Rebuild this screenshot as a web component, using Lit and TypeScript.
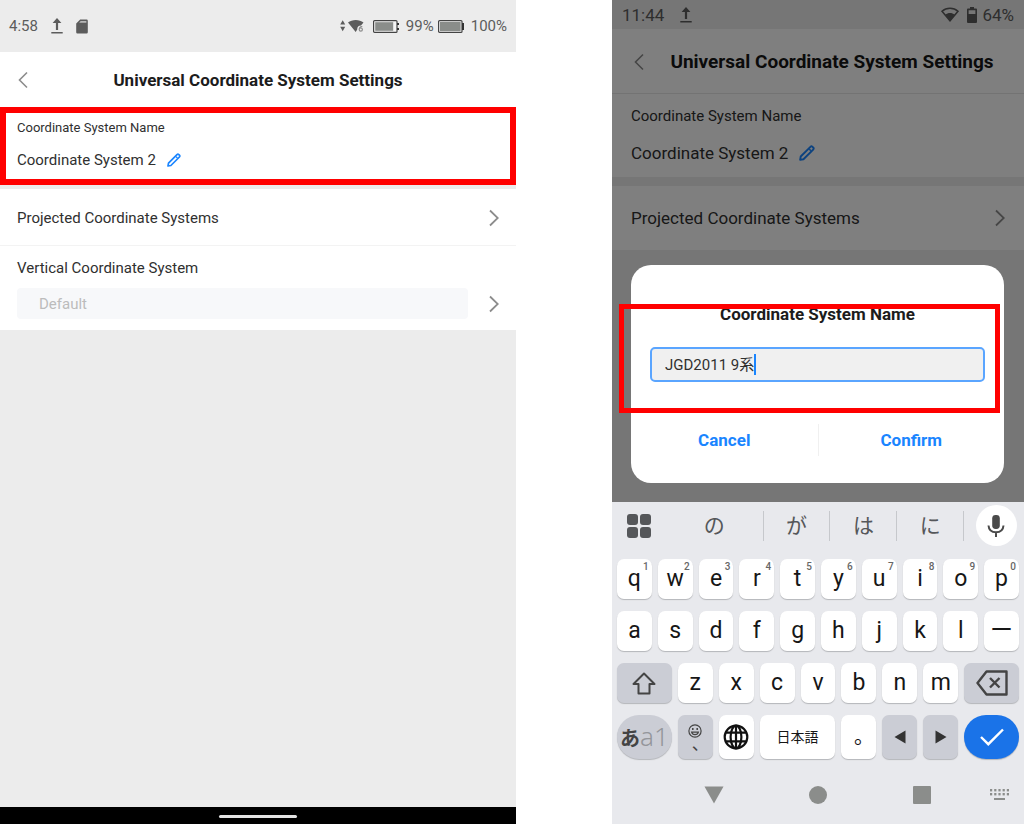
import { LitElement, html, css, svg, nothing } from "lit";
import { customElement } from "lit/decorators.js";

const chevronLeft = html`<svg class="chev" width="10" height="18" viewBox="0 0 10 18" fill="none" stroke="currentColor" stroke-width="1.6"><path d="M9 1.5 1.5 9 9 16.5" /></svg>`;
const chevronRight = html`<svg class="chev" width="10" height="18" viewBox="0 0 10 18" fill="none" stroke="currentColor" stroke-width="1.8"><path d="M1 1.5 8.8 9 1 16.5" /></svg>`;
const upload = html`<svg width="12" height="16" viewBox="0 0 12 16" fill="currentColor"><path d="M6 0 10.4 5H7.1V12H4.9V5H1.6ZM0.3 14H11.7V15.6H0.3Z" /></svg>`;
const sdCard = html`<svg width="12" height="15" viewBox="0 0 12 15"><path fill="currentColor" d="M4.2.5H10.6A1.2 1.2 0 0 1 11.8 1.7V13.2A1.2 1.2 0 0 1 10.6 14.4H1.4A1.2 1.2 0 0 1 .2 13.2V4.5Z" /><path fill="#b8b8b8" d="M4.6 2H10.4V3.8H3.2Z" /></svg>`;
const pencil = (size: number) => html`<svg width=${size} height=${size} viewBox="0 0 14 14" fill="none" stroke="#1a85ff" stroke-width="1.7" stroke-linejoin="round"><path d="M1 13 1.5 10.1 10 1.6A1.3 1.3 0 0 1 11.8 1.6L12.4 2.2A1.3 1.3 0 0 1 12.4 4L3.9 12.5Z" /><path d="M9 3.6 10.4 5" stroke-width="1.3" /></svg>`;

const shared = css`
  * {
    box-sizing: border-box;
  }
  button,
  input {
    font: inherit;
    color: inherit;
    margin: 0;
    padding: 0;
    border: 0;
    background: none;
  }
  svg {
    display: block;
    flex: none;
  }
  h1,
  h2,
  p {
    margin: 0;
  }
  .row {
    display: flex;
    align-items: center;
  }
  .grow {
    flex: 1;
    min-width: 0;
  }
`;

@customElement("settings-page")
export class SettingsPage extends LitElement {
  static styles = [
    shared,
    css`
      :host {
        display: flex;
        flex-direction: column;
        background: #ececec;
        color: #303030;
        font-size: 15px;
        line-height: 20px;
      }
      .status {
        height: 52px;
        padding: 0 9px;
        color: #5c5c5c;
      }
      .status svg {
        margin-left: 13px;
      }
      .status .net {
        margin: 0 9px 0 0;
      }
      .status .cell {
        margin: 0 7px 0 0;
      }
      .status .full {
        margin: 0 7px 0 4px;
      }
      header {
        display: grid;
        grid-template-columns: 20px 1fr 20px;
        align-items: center;
        height: 55px;
        padding: 0 18px;
        background: #fff;
      }
      .chev {
        color: #8c8c8c;
      }
      h1 {
        font-size: 17px;
        font-weight: 700;
        color: #1c1c1c;
        text-align: center;
      }
      .name {
        border: 6px solid #f00;
        background: #fff;
        padding: 5px 11px 9px;
      }
      .name label {
        display: block;
        font-size: 13px;
        margin-bottom: 12px;
      }
      .name .row {
        gap: 11px;
      }
      .item {
        width: 100%;
        height: 57px;
        margin-top: 4px;
        padding: 1px 17px 0;
        background: #fff;
        border-bottom: 1px solid #f3f3f3;
        text-align: left;
      }
      .vertical {
        background: #fff;
        padding: 12px 17px 11px;
      }
      .vertical label {
        display: block;
        margin-bottom: 10px;
      }
      .vertical .row {
        gap: 21px;
      }
      .vertical input {
        height: 31px;
        padding: 0 22px;
        border-radius: 4px;
        background: #f7f8fa;
        color: #bcbcbc;
      }
      .gesture {
        margin-top: auto;
        height: 17px;
        background: #000;
        display: flex;
        justify-content: center;
        align-items: center;
      }
      .gesture span {
        width: 78px;
        height: 3px;
        margin-top: 2px;
        border-radius: 2px;
        background: #e4e4e4;
      }
    `,
  ];

  render() {
    return html`
      <div class="status row">
        <span>4:58</span>${upload}${sdCard}<span class="grow"></span>
        <svg class="net" width="24" height="14" viewBox="0 0 24 14">
          <path fill="currentColor" d="M0.2 5.6 2.7 1.2 5.2 5.6ZM0.2 7.8 2.7 12.2 5.2 7.8Z" />
          <path fill="currentColor" d="M8 3.6C12 .2 19.5 .2 23.5 3.6L21 6.6C18.5 6.6 17.2 8 17.2 10.6L15.7 13Z" />
          <path fill="none" stroke="#8c8c8c" stroke-width="1.2" d="M22.3 7.6C20 7.3 19.2 9 19.2 10.6M19.2 10.6A1.6 1.6 0 1 0 22.4 10.6A1.6 1.6 0 1 0 19.2 10.6" />
        </svg>
        <svg class="cell" width="26" height="13" viewBox="0 0 26 13">
          <rect x=".6" y=".6" width="23.4" height="11.8" rx="1" fill="#f5f5f5" stroke="#444" stroke-width="1.2" />
          <rect x="2.2" y="2.2" width="18" height="8.6" fill="#8a8d8a" />
          <path d="M24 3H26V5H24ZM24 8H26V10H24Z" fill="#333" />
        </svg>
        <span>99%</span>
        <svg class="full" width="26" height="13" viewBox="0 0 26 13">
          <rect x=".6" y=".6" width="23.4" height="11.8" rx="1" fill="#f5f5f5" stroke="#444" stroke-width="1.2" />
          <rect x="2" y="2" width="20.6" height="9" fill="#8a8d8a" />
          <path d="M24 3H26.4V10H24Z" fill="#333" />
        </svg>
        <span>100%</span>
      </div>
      <header>
        <button aria-label="Back">${chevronLeft}</button>
        <h1>Universal Coordinate System Settings</h1>
      </header>
      <section class="name">
        <label for="edit">Coordinate System Name</label>
        <div class="row">
          <span>Coordinate System 2</span>
          <button id="edit">${pencil(14)}</button>
        </div>
      </section>
      <button class="item row"><span class="grow">Projected Coordinate Systems</span>${chevronRight}</button>
      <section class="vertical">
        <label for="vertical">Vertical Coordinate System</label>
        <div class="row">
          <input id="vertical" class="grow" value="Default" disabled />
          <button aria-label="Select vertical system">${chevronRight}</button>
        </div>
      </section>
      <div class="gesture"><span></span></div>
    `;
  }
}

@customElement("rename-page")
export class RenamePage extends LitElement {
  static styles = [
    shared,
    css`
      :host {
        display: block;
        position: relative;
        background: #ececec;
        color: #303030;
        font-size: 17px;
        line-height: 20px;
      }
      .status {
        height: 29px;
        padding: 0 10px;
        color: #5c5c5c;
      }
      .status .up {
        margin-left: 16px;
      }
      .wifi {
        margin-right: 8px;
      }
      .battery {
        margin-right: 5px;
      }
      header {
        display: grid;
        grid-template-columns: 12px 1fr;
        gap: 12px;
        align-items: center;
        height: 65px;
        padding: 1px 18px 0 22px;
        background: #fff;
        border-bottom: 1px solid #e6e6e6;
      }
      .chev {
        color: #8c8c8c;
      }
      h1 {
        font-size: 19px;
        font-weight: 700;
        color: #161616;
        text-align: center;
        white-space: nowrap;
      }
      .name {
        background: #fff;
        padding: 12px 19px 14px;
      }
      .name p {
        font-size: 15px;
        margin-bottom: 17px;
      }
      .name .row {
        gap: 11px;
      }
      .item {
        width: 100%;
        height: 64px;
        margin-top: 9px;
        padding: 0 19px;
        background: #fff;
        text-align: left;
      }
      .shade {
        position: absolute;
        inset: 0;
        display: flex;
        align-items: flex-end;
        padding: 0 20px 19px 19px;
        background: rgba(0, 0, 0, 0.5);
      }
      .modal {
        position: relative;
        flex: 1;
        padding: 39px 19px 27px;
        border-radius: 20px;
        background: #fff;
      }
      h2 {
        font-size: 17px;
        font-weight: 700;
        color: #1c1c1c;
        text-align: center;
      }
      .field {
        position: relative;
        margin: 23px 0 42px;
        font-size: 15px;
      }
      .field input {
        display: block;
        width: 100%;
        height: 35px;
        padding: 0 13px 2px;
        border: 2px solid #5aa5ff;
        border-radius: 5px;
        background: #f0f0f0;
        outline: none;
      }
      .caret {
        position: absolute;
        left: 104px;
        top: 7px;
        width: 2px;
        height: 21px;
        background: #1a85ff;
      }
      .actions {
        display: grid;
        grid-template-columns: 1fr 1fr;
        margin: 0 -19px;
        color: #1a85ff;
        font-weight: 700;
      }
      .actions button {
        height: 32px;
      }
      .actions button + button {
        border-left: 1px solid #f0f0f0;
      }
      .mark {
        position: absolute;
        left: -12px;
        right: 4px;
        top: 39px;
        height: 109px;
        border: 5px solid #f00;
        pointer-events: none;
      }
    `,
  ];

  render() {
    return html`
      <div class="status row">
        <span>11:44</span><span class="up">${upload}</span><span class="grow"></span>
        <svg class="wifi" width="18" height="15" viewBox="0 0 18 15">
          <path fill="none" stroke="currentColor" stroke-width="1.5" d="M1 4.2C5.5 .1 12.5 .1 17 4.2L9 13.8Z" />
          <path fill="currentColor" d="M4.3 7.6C7 5.5 11 5.5 13.7 7.6L9 14Z" />
        </svg>
        <svg class="battery" width="10" height="16" viewBox="0 0 10 16">
          <path fill="currentColor" fill-rule="evenodd" d="M3 0H7V1.6H9A1 1 0 0 1 10 2.6V15A1 1 0 0 1 9 16H1A1 1 0 0 1 0 15V2.6A1 1 0 0 1 1 1.6H3ZM1.6 3.2V7H8.4V3.2Z" />
        </svg>
        <span>64%</span>
      </div>
      <header>
        <button aria-label="Back">${chevronLeft}</button>
        <h1>Universal Coordinate System Settings</h1>
      </header>
      <section class="name">
        <p>Coordinate System Name</p>
        <div class="row">
          <span>Coordinate System 2</span>
          <button aria-label="Edit name">${pencil(16)}</button>
        </div>
      </section>
      <button class="item row"><span class="grow">Projected Coordinate Systems</span>${chevronRight}</button>
      <div class="shade">
        <div class="modal" role="dialog" aria-labelledby="title">
          <h2 id="title">Coordinate System Name</h2>
          <div class="field">
            <input aria-labelledby="title" value="JGD2011 9系" />
            <span class="caret"></span>
          </div>
          <div class="actions"><button>Cancel</button><button>Confirm</button></div>
          <div class="mark"></div>
        </div>
      </div>
    `;
  }
}

@customElement("soft-keyboard")
export class SoftKeyboard extends LitElement {
  static styles = [
    shared,
    css`
      :host {
        display: block;
        background: #e8e9ed;
        color: #161616;
        line-height: 24px;
      }
      .suggest {
        display: grid;
        grid-template-columns: 54fr 98fr 67fr 67fr 67fr 60fr;
        align-items: center;
        height: 47px;
        color: #55575a;
        font-size: 21px;
      }
      .suggest > * {
        display: flex;
        justify-content: center;
        align-items: center;
        height: 30px;
      }
      .suggest .word {
        border-right: 1px solid #c6c8cc;
      }
      .suggest .mic {
        justify-self: center;
        width: 41px;
        height: 41px;
        margin-left: 4px;
        border-radius: 50%;
        background: #fff;
      }
      .keys {
        display: flex;
        flex-direction: column;
        gap: 12px;
        padding: 10px 5px 0;
      }
      .line {
        display: flex;
        gap: 6px;
        height: 40px;
      }
      .line.tall {
        height: 44px;
      }
      .key {
        position: relative;
        flex: 35 1 0;
        min-width: 0;
        display: flex;
        justify-content: center;
        align-items: center;
        border-radius: 7px;
        background: #fff;
        box-shadow: 0 1px 1px #b4b6ba;
        font-size: 23px;
      }
      .key sup {
        position: absolute;
        top: 2px;
        right: 3px;
        font-size: 10px;
        font-weight: 500;
        line-height: 12px;
        color: #666;
      }
      .wide {
        flex-grow: 55;
      }
      .space {
        flex-grow: 76;
        font-size: 14px;
      }
      .dark {
        background: #cbcdd5;
        color: #444;
      }
      .pill {
        border-radius: 22px;
      }
      .mode {
        align-items: baseline;
        font-size: 20px;
        font-weight: 700;
        line-height: 43px;
      }
      .mode span {
        font-family: "Noto Sans", sans-serif;
        font-size: 26px;
        font-weight: 300;
        color: #94969b;
      }
      .emoji {
        flex-direction: column;
        font-size: 17px;
        line-height: 12px;
      }
      .emoji span {
        padding-left: 10px;
      }
      .stop {
        font-size: 20px;
      }
      .stop span {
        padding-left: 10px;
      }
      .go {
        background: #1a73e8;
      }
      .nav {
        display: grid;
        grid-template-columns: 50fr 104fr 104fr 104fr 50fr;
        align-items: center;
        height: 65px;
        padding-top: 6px;
        color: #8b8d8b;
      }
      .nav button {
        display: flex;
        justify-content: center;
      }
      .nav button:first-child {
        grid-column: 2;
      }
    `,
  ];

  private letters(keys: string, digits = "") {
    return [...keys].map(
      (k, i) => html`<button class="key">${k}${digits ? html`<sup>${digits[i]}</sup>` : nothing}</button>`
    );
  }

  render() {
    const dots = [0, 1].flatMap((r) =>
      [0, 1, 2, 3, 4].map((c) => svg`<rect x=${c * 4.2} y=${r * 4} width="2.2" height="2.4" />`)
    );
    return html`
      <div class="suggest">
        <button aria-label="Menu">
          <svg width="24" height="24" viewBox="0 0 24 24" fill="#55575a">
            <rect width="11" height="11" rx="3" /><rect x="13" width="11" height="11" rx="3" />
            <rect y="13" width="11" height="11" rx="3" /><rect x="13" y="13" width="11" height="11" rx="3" />
          </svg>
        </button>
        ${["の", "が", "は", "に"].map((w) => html`<button class="word">${w}</button>`)}
        <button class="mic" aria-label="Voice input">
          <svg width="18" height="24" viewBox="0 0 18 24">
            <rect x="5.2" y="1" width="7.6" height="14" rx="3.4" fill="#4a4a4a" />
            <path d="M1.5 11.5C1.8 16 5 18.2 9 18.2S16.2 16 16.5 11.5M9 18V23" fill="none" stroke="#4a4a4a" stroke-width="2" />
          </svg>
        </button>
      </div>
      <div class="keys">
        <div class="line">${this.letters("qwertyuiop", "1234567890")}</div>
        <div class="line">${this.letters("asdfghjkl")}<button class="key">ー</button></div>
        <div class="line">
          <button class="key wide dark" aria-label="Shift">
            <svg width="24" height="23" viewBox="0 0 24 23" fill="none" stroke="#444" stroke-width="2" stroke-linejoin="round"><path d="M12 1.5 22.5 12H17.5V21.5H6.5V12H1.5Z" /></svg>
          </button>
          ${this.letters("zxcvbnm")}
          <button class="key wide dark" aria-label="Delete">
            <svg width="32" height="26" viewBox="0 0 32 26" fill="none" stroke="#444" stroke-width="2.4" stroke-linejoin="round"><path d="M10.5 1.5H30.5V24.5H10.5L1.5 13Z" /><path d="M14 8 23.5 17.5M23.5 8 14 17.5" /></svg>
          </button>
        </div>
        <div class="line tall">
          <button class="key wide dark pill mode">あ<span>a1</span></button>
          <button class="key dark emoji">
            <svg width="14" height="14" viewBox="0 0 14 14" fill="none" stroke="#444" stroke-width="1.2"><circle cx="7" cy="7" r="6.1" /><path d="M3.6 8.2C4.4 11.4 9.6 11.4 10.4 8.2Z" /><path d="M4.8 4V6M9.2 4V6" stroke-width="1.5" /></svg>
            <span>、</span>
          </button>
          <button class="key" aria-label="Language">
            <svg width="26" height="26" viewBox="0 0 26 26" fill="none" stroke="#111" stroke-width="2.2"><circle cx="13" cy="13" r="11.3" /><ellipse cx="13" cy="13" rx="5.4" ry="11.3" /><path d="M13 1.7V24.3M2.8 8.6H23.2M2.8 17.4H23.2" /></svg>
          </button>
          <button class="key space">日本語</button>
          <button class="key stop"><span>。</span></button>
          <button class="key dark" aria-label="Left"><svg width="12" height="14" viewBox="0 0 12 14" fill="#333"><path d="M11.5 .5V13.5L.5 7Z" /></svg></button>
          <button class="key dark" aria-label="Right"><svg width="12" height="14" viewBox="0 0 12 14" fill="#333"><path d="M.5 .5V13.5L11.5 7Z" /></svg></button>
          <button class="key wide pill go" aria-label="Done">
            <svg width="24" height="18" viewBox="0 0 24 18" fill="none" stroke="#fff" stroke-width="2.4"><path d="M1 9 8.3 16.2 23 1.5" /></svg>
          </button>
        </div>
      </div>
      <div class="nav">
        <button aria-label="Back"><svg width="20" height="18" viewBox="0 0 20 18" fill="currentColor"><path d="M.5 .5H19.5L10 17.5Z" /></svg></button>
        <button aria-label="Home"><svg width="18" height="18" viewBox="0 0 18 18" fill="currentColor"><circle cx="9" cy="9" r="9" /></svg></button>
        <button aria-label="Recent"><svg width="18" height="18" viewBox="0 0 18 18" fill="currentColor"><rect width="18" height="18" rx="1" /></svg></button>
        <button aria-label="Hide keyboard"><svg width="19" height="12" viewBox="0 0 19 12" fill="currentColor">${dots}<rect x="4" y="9" width="11" height="2" /></svg></button>
      </div>
    `;
  }
}

@customElement("app-root")
export class AppRoot extends LitElement {
  static styles = css`
    :host {
      display: grid;
      grid-template-columns: 516fr 96fr 412fr;
      min-height: 100vh;
      background: #fff;
      font-family: Roboto, "Noto Sans CJK JP", sans-serif;
    }
    .second {
      grid-column: 3;
      display: flex;
      flex-direction: column;
      min-width: 0;
    }
    .second rename-page {
      flex: 1;
    }
  `;

  render() {
    return html`
      <settings-page></settings-page>
      <div class="second">
        <rename-page></rename-page>
        <soft-keyboard></soft-keyboard>
      </div>
    `;
  }
}
